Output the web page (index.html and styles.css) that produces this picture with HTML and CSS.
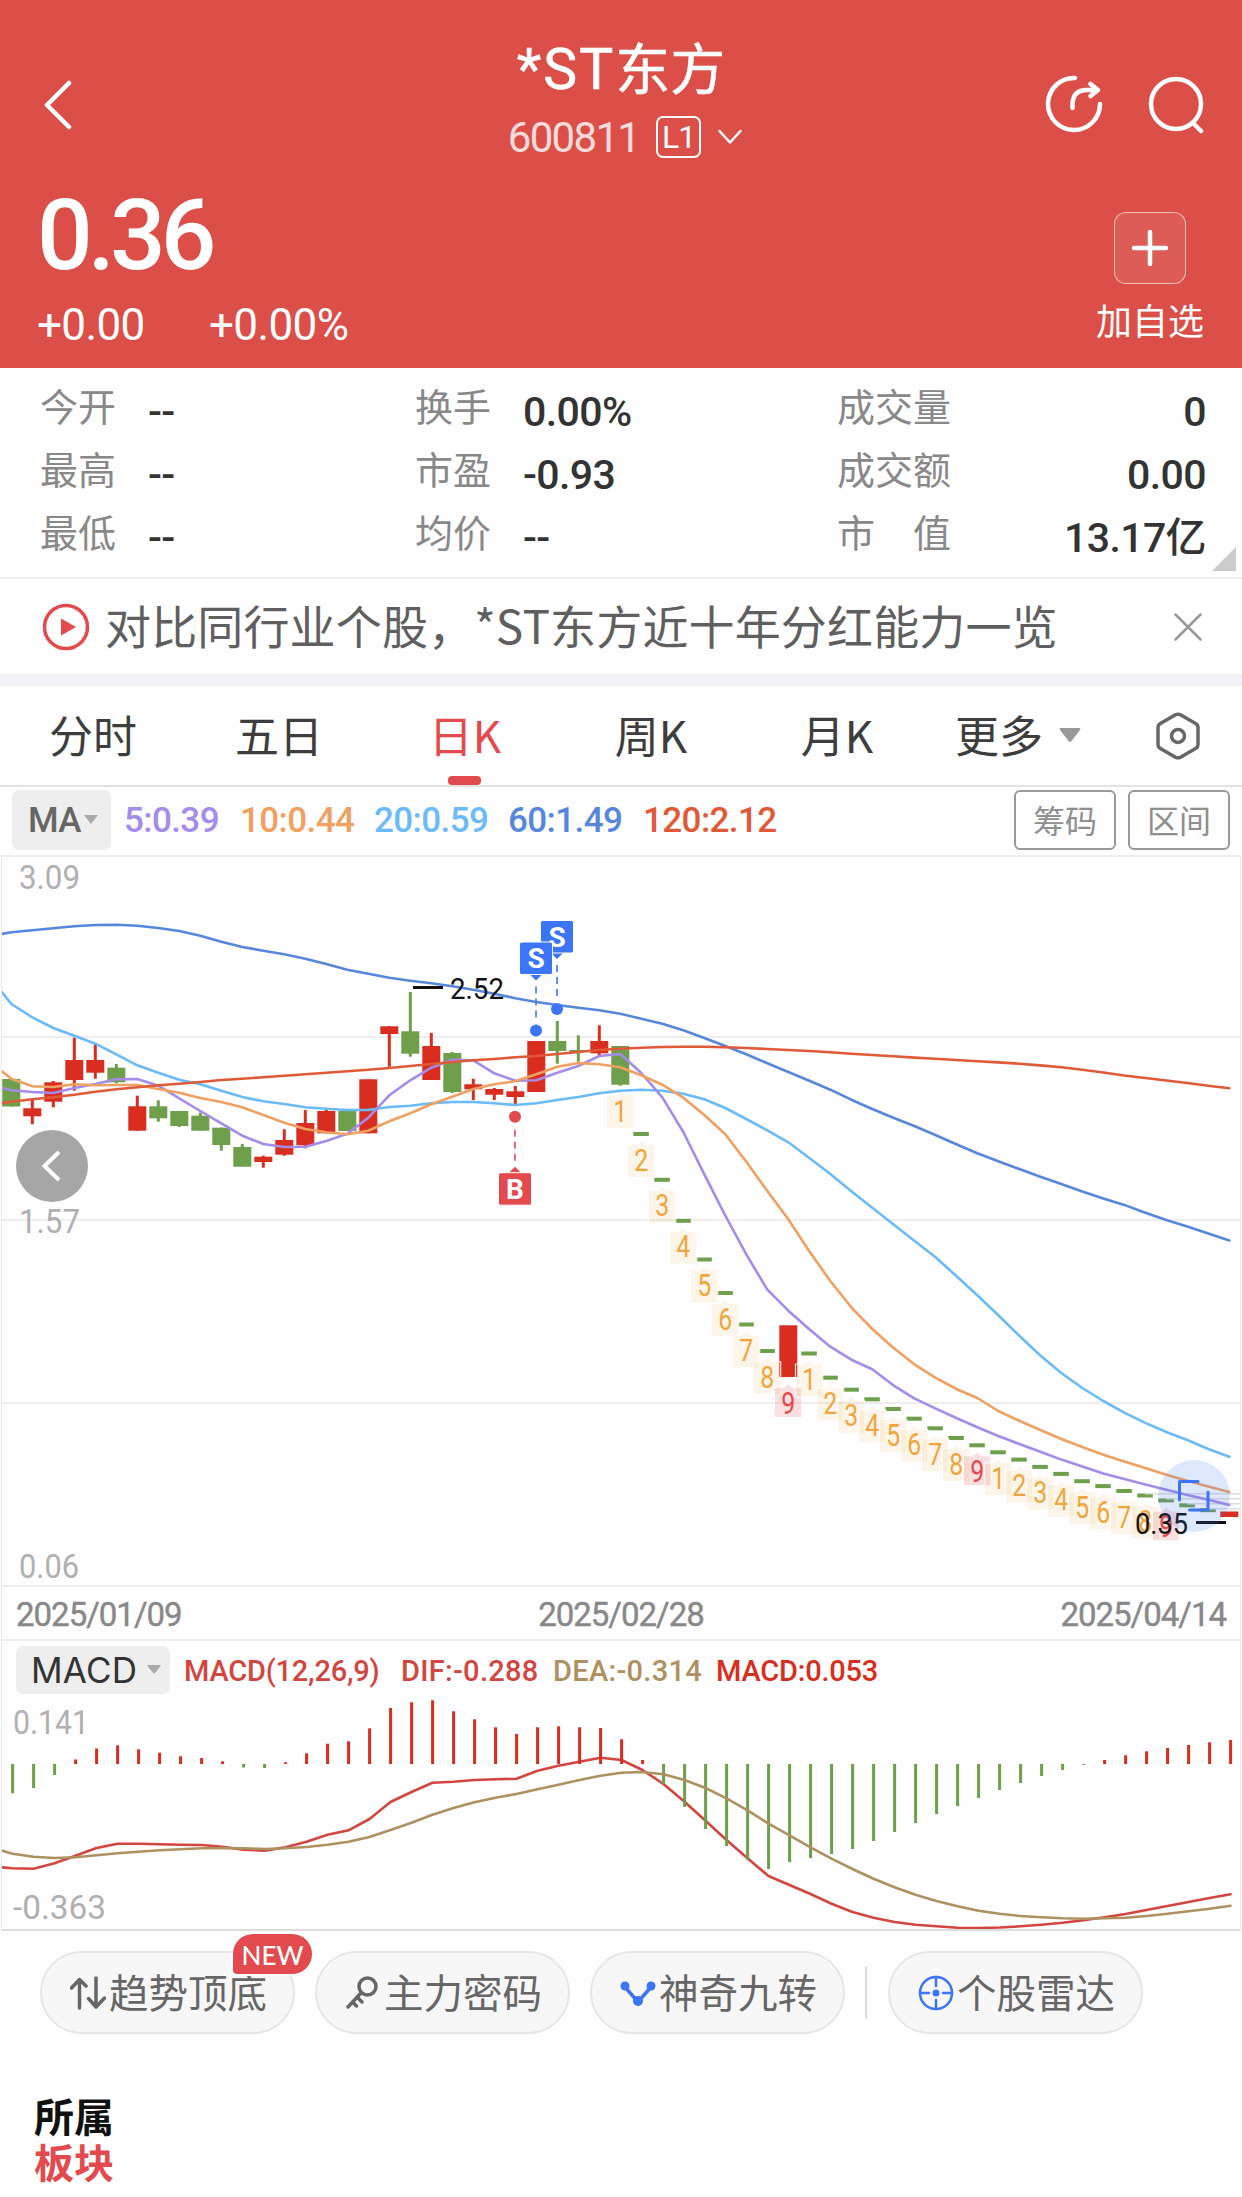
FILE: index.html
```
<!DOCTYPE html>
<html lang="zh-CN">
<head>
    <meta charset="UTF-8">
    <meta name="viewport" content="width=device-width, initial-scale=1.0">
    <title>*ST东方 600811</title>
    <link rel="stylesheet" href="styles.css">
</head>
<body>
<header class="header">
    <div class="topbar">
        <svg class="back" width="30" height="50" viewBox="0 0 30 50"><path d="M26 3L4 25L26 47"/></svg>
        <div class="title">
            <h1><span>*ST</span>东方</h1>
            <div class="code">
                <span class="num">600811</span>
                <span class="level">L1</span>
                <svg width="24" height="16" viewBox="0 0 24 16"><path d="M1.5 2L12 13.5L22.500 2"/></svg>
            </div>
        </div>
        <div class="actions">
            <svg width="60" height="60" viewBox="0 0 60 60">
                <path d="M31 4A26 26 0 1 0 56 30"/>
                <path d="M28.500 34V31Q28.500 16 43 16H53M46.500 10L54 16L46.500 22"/>
            </svg>
            <svg width="60" height="60" viewBox="0 0 60 60">
                <circle cx="30" cy="30" r="25"/>
                <path d="M47 49L55 57"/>
            </svg>
        </div>
    </div>
    <div class="quote">
        <div>
            <div class="price">0.36</div>
            <div class="change"><span>+0.00</span><span>+0.00%</span></div>
        </div>
        <div class="favorite">
            <div class="plus"><svg width="40" height="40" viewBox="0 0 40 40"><path d="M4 20H36M20 4V36"/></svg></div>
            <span>加自选</span>
        </div>
    </div>
</header>

<section class="stats">
    <div class="stat"><label>今开</label><b>--</b></div>
    <div class="stat"><label>换手</label><b>0.00%</b></div>
    <div class="stat last"><label>成交量</label><b>0</b></div>
    <div class="stat"><label>最高</label><b>--</b></div>
    <div class="stat"><label>市盈</label><b>-0.93</b></div>
    <div class="stat last"><label>成交额</label><b>0.00</b></div>
    <div class="stat"><label>最低</label><b>--</b></div>
    <div class="stat"><label>均价</label><b>--</b></div>
    <div class="stat last"><label>市　值</label><b>13.17亿</b></div>
    <i class="corner"></i>
</section>

<section class="notice">
    <svg class="play" width="48" height="48" viewBox="0 0 48 48">
        <circle cx="24" cy="24" r="21.500"/>
        <path d="M19 15.500L34 24L19 32.500Z"/>
    </svg>
    <p>对比同行业个股，*ST东方近十年分红能力一览</p>
    <svg class="close" width="28" height="28" viewBox="0 0 28 28"><path d="M1.500 1.500L26.500 26.500M26.500 1.500L1.500 26.500"/></svg>
</section>

<nav class="tabs">
    <span>分时</span>
    <span>五日</span>
    <span class="active">日K</span>
    <span>周K</span>
    <span>月K</span>
    <span class="more">更多<svg width="22" height="16" viewBox="0 0 22 16"><path d="M2 1H20Q22 1 21 3L12.500 14Q11 16 9.500 14L1 3Q0 1 2 1Z"/></svg></span>
    <svg class="setting" width="48" height="48" viewBox="0 0 48 48">
        <path d="M21.500 2.800Q24 1.500 26.500 2.800L42 11.800Q44 13 44 15.500V32.500Q44 35 42 36.200L26.500 45.200Q24 46.500 21.500 45.200L6 36.200Q4 35 4 32.500V15.500Q4 13 6 11.800Z"/>
        <circle cx="24" cy="24" r="6.500"/>
    </svg>
</nav>

<div class="ma-bar">
    <div class="select">MA<svg width="16" height="10" viewBox="0 0 16 10"><path d="M1 0H15L8 9Z"/></svg></div>
    <span class="ma5">5:0.39</span>
    <span class="ma10">10:0.44</span>
    <span class="ma20">20:0.59</span>
    <span class="ma60">60:1.49</span>
    <span class="ma120">120:2.12</span>
    <button class="first">筹码</button>
    <button>区间</button>
</div>

<div class="panel">
    <svg id="kline" width="1238" height="732" viewBox="2 855 1238 732"></svg>
    <div class="dates"><span>2025/01/09</span><span>2025/02/28</span><span>2025/04/14</span></div>
    <div class="macd-bar">
        <div class="select">MACD<svg width="14" height="9" viewBox="0 0 14 9"><path d="M0 0H14Q13 2 7.500 8.500H6.500Q1 2 0 0Z"/></svg></div>
        <span class="dif params">MACD(12,26,9)</span>
        <span class="dif value">DIF:-0.288</span>
        <span class="dea">DEA:-0.314</span>
        <span class="macd">MACD:0.053</span>
    </div>
    <svg id="macd" width="1238" height="232" viewBox="2 1697 1238 232"></svg>
</div>

<div class="tools">
    <div class="pill">
        <svg width="36" height="36" viewBox="0 0 36 36"><path d="M9.500 33V5M1.500 13L9.500 4.500L16 11M26 3V31M18.500 23.500L26 32L34.500 23"/></svg>趋势顶底
        <em>NEW</em>
    </div>
    <div class="pill">
        <svg width="36" height="36" viewBox="0 0 36 36"><circle cx="22.500" cy="11.500" r="8.500"/><path d="M16 18L3 32M12 22L17 27M7.500 27L11.500 31"/></svg>主力密码
    </div>
    <div class="pill blue">
        <svg width="36" height="36" viewBox="0 0 36 36"><path d="M5 12L18 27L31 12"/><circle class="dot" cx="5" cy="11" r="4.500"/><circle class="dot" cx="18" cy="26" r="5"/><circle class="dot" cx="31" cy="11" r="4.500"/></svg>神奇九转
    </div>
    <i class="divider"></i>
    <div class="pill blue radar">
        <svg width="36" height="36" viewBox="0 0 36 36"><circle cx="18" cy="18" r="16"/><path d="M18 2V11M18 25V34M2 18H11M25 18H34"/><circle class="dot" cx="18" cy="18" r="3.500"/></svg>个股雷达
    </div>
</div>

<h2 class="sector">所属<br><span>板块</span></h2>

<script src="chart.js"></script>
</body>
</html>
```
FILE: styles.css
```
body {
    margin: 0;
    width: 1242px;
    background-color: #fefefe;
    font-family: Roboto, "Noto Sans CJK SC", sans-serif;
    color: #333;
}

svg {
    display: block;
    flex: none;
    fill: none;
    stroke-linecap: round;
    stroke-linejoin: round;
}

/* header */
.header {
    height: 368px;
    box-sizing: border-box;
    padding: 35px 37px 0 37px;
    background-color: #dc4f48;
    color: #fff;
}

.header svg {
    stroke: #fff;
    stroke-width: 4.5;
}

.topbar {
    display: grid;
    grid-template-columns: 200px 1fr 200px;
    height: 161px;
}

.back {
    margin: 45px 0 0 6px;
}

.title h1 {
    margin: 0 0 21px;
    font: 400 55px/60px "Noto Sans CJK SC", sans-serif;
    text-align: center;
    -webkit-text-stroke: 0.6px #fff;
}

.title h1 span {
    font-family: Roboto, sans-serif;
    font-size: 57px;
    line-height: 50px;
    letter-spacing: 2px;
}

.code {
    display: flex;
    align-items: center;
    justify-content: center;
    height: 42px;
    padding-left: 8px;
}

.code .num {
    font-size: 42px;
    letter-spacing: -1.7px;
    margin-right: 17px;
    opacity: 0.8;
}

.level {
    box-sizing: border-box;
    width: 45px;
    height: 42px;
    border: 2px solid #fff;
    border-radius: 7px;
    font-size: 32px;
    line-height: 38px;
    letter-spacing: -1px;
    text-align: center;
    margin-right: 17px;
}

.code svg {
    stroke-width: 2.5;
}

.actions {
    display: flex;
    justify-content: flex-end;
    gap: 42px;
    margin: 39px -1px 0 0;
}

.quote {
    display: flex;
    justify-content: space-between;
}

.price {
    font-size: 98px;
    font-weight: 500;
    line-height: 80px;
    letter-spacing: -5px;
}

.change {
    margin-top: 27px;
    font-size: 44px;
    line-height: 44px;
    letter-spacing: -0.6px;
}

.change span {
    display: inline-block;
    width: 172px;
}

.favorite {
    display: flex;
    flex-direction: column;
    align-items: center;
    padding: 16px 1px 0 0;
    font-size: 36px;
    line-height: 36px;
}

.plus {
    display: flex;
    align-items: center;
    justify-content: center;
    width: 70px;
    height: 70px;
    margin: 0 0 21px;
    border: 1px solid rgba(255, 255, 255, 0.6);
    border-radius: 12px;
    background-color: rgba(255, 255, 255, 0.08);
}

/* quote numbers */
.stats {
    position: relative;
    display: grid;
    grid-template-columns: 375px 422px 1fr;
    grid-auto-rows: 63px;
    height: 211px;
    box-sizing: border-box;
    padding: 12px 36px 0 40px;
    border-bottom: 2px solid #eee;
}

.stat {
    display: flex;
    align-items: center;
    height: 63px;
}

.stat label {
    margin-right: 32px;
    padding-bottom: 7px;
    font-size: 38px;
    line-height: 46px;
    color: #888;
}

.stat b {
    font-size: 41px;
    font-weight: 500;
    line-height: 46px;
    letter-spacing: -0.6px;
}

.stat.last {
    justify-content: space-between;
}

.corner {
    position: absolute;
    right: 6px;
    bottom: 6px;
    border-left: 24px solid transparent;
    border-bottom: 24px solid #ccc;
}

.notice {
    display: flex;
    align-items: center;
    height: 94px;
    padding: 0 40px 0 42px;
    border-bottom: 12px solid #f2f3f8;
    margin-top: 1px;
}

.play circle {
    stroke: #e34a4d;
    stroke-width: 3.5;
}

.play path {
    fill: #e34a4d;
}

.notice p {
    flex: 1;
    margin: 0 0 6px 15px;
    font: 46px/50px "Noto Sans CJK SC", sans-serif;
    letter-spacing: 0.15px;
    white-space: nowrap;
    color: #5f5f5f;
}

.close {
    stroke: #999;
    stroke-width: 2.5;
}

/* period tabs */
.tabs {
    display: flex;
    align-items: center;
    height: 99px;
    border-bottom: 2px solid #e3e3e3;
    font: 44px/60px "Noto Sans CJK SC", sans-serif;
    color: #3d3d3d;
}

.tabs span {
    position: relative;
    width: 186px;
    padding-bottom: 4px;
    text-align: center;
}

.tabs .active {
    color: #e34a4d;
}

.tabs .active::after {
    content: "";
    position: absolute;
    left: 76px;
    bottom: -17px;
    width: 33px;
    height: 9px;
    border-radius: 4px;
    background-color: #e34a4d;
}

.tabs .more {
    display: flex;
    align-items: center;
    gap: 16px;
    width: 130px;
    padding-left: 25px;
}

.tabs .more svg {
    fill: #999;
    margin-top: 2px;
}

.setting {
    margin-left: 69px;
    stroke: #666;
    stroke-width: 3.5;
}

.ma-bar {
    display: flex;
    align-items: center;
    height: 66px;
    padding: 0 12px 2px;
    font-size: 35px;
    letter-spacing: -0.6px;
}

.select {
    display: flex;
    align-items: center;
    box-sizing: border-box;
    border-radius: 7px;
    background-color: #eee;
}

.select svg {
    fill: #aaa;
}

.ma-bar .select {
    width: 99px;
    height: 60px;
    padding-left: 16px;
    gap: 2px;
    font-weight: 500;
    color: #666;
}

.ma-bar span {
    font-weight: 500;
    font-size: 35px;
}

.ma5 { width: 116px; margin-left: 13px; color: #a58bea; }
.ma10 { width: 134px; color: #f0a060; }
.ma20 { width: 134px; color: #6abbf8; }
.ma60 { width: 135px; color: #5787dd; }
.ma120 { color: #e05a38; }

.ma-bar button {
    width: 102px;
    height: 60px;
    margin: 0 0 0 12px;
    padding: 0 0 3px;
    border: 2px solid #999;
    border-radius: 6px;
    background: none;
    font: 32px/50px "Noto Sans CJK SC", sans-serif;
    color: #8f8f8f;
}

.ma-bar .first {
    margin-left: auto;
}

/* charts */
.panel {
    margin: 0 1px;
    border: 1px solid #ebebeb;
    border-top: 0;
    border-bottom: 2px solid #ddd;
}

.panel text {
    stroke: none;
}

.dates {
    display: flex;
    justify-content: space-between;
    box-sizing: border-box;
    height: 54px;
    padding: 0 14px 0 14px;
    border-bottom: 2px solid #eee;
    font-size: 33px;
    line-height: 56px;
    letter-spacing: -1px;
    -webkit-text-stroke: 0.4px #888;
    color: #888;
}

.macd-bar {
    display: flex;
    align-items: center;
    height: 56px;
    padding: 1px 14px 0;
    box-sizing: border-box;
    font-size: 29px;
    letter-spacing: -0.2px;
    font-weight: 500;
}

.macd-bar span {
    padding-top: 3px;
}

.macd-bar .select {
    width: 154px;
    height: 48px;
    padding-left: 15px;
    gap: 10px;
    font: 35px Inter, sans-serif;
    letter-spacing: 0.2px;
}

.dif { color: #d34640; }
.params { width: 217px; margin-left: 14px; }
.value { width: 152px; letter-spacing: 0.3px; }
.dea { width: 163px; letter-spacing: 0.3px; color: #ae9160; }
.macd { color: #d92d20; }

/* bottom tools */
.tools {
    display: flex;
    align-items: center;
    padding: 20px 40px 0;
    gap: 20px;
}

.pill {
    position: relative;
    display: flex;
    align-items: center;
    gap: 3px;
    box-sizing: border-box;
    width: 255px;
    height: 83px;
    padding: 0 0 3px 28px;
    border: 2px solid #e6e6e6;
    border-radius: 42px;
    background-color: #f7f7f7;
    font: 39.5px/50px "Noto Sans CJK SC", sans-serif;
    white-space: nowrap;
    color: #666;
}

.pill svg {
    stroke: #666;
    stroke-width: 3.5;
    margin-top: 3px;
}

.pill.blue svg {
    stroke: #3b74f7;
    stroke-width: 3.5;
}

.pill.radar svg {
    stroke-width: 2.5;
}

.pill .dot {
    fill: #3b74f7;
    stroke: none;
}

.pill em {
    position: absolute;
    left: 191px;
    top: -19px;
    width: 79px;
    height: 40px;
    border-radius: 20px 20px 20px 4px;
    box-shadow: 0 0 0 2px #fff;
    background-color: #e34a4d;
    color: #fff;
    font: 500 26px/42px Lato, sans-serif;
    text-align: center;
}

.divider {
    width: 2px;
    height: 53px;
    margin-right: 1px;
    background-color: #ddd;
}

.sector {
    margin: 58px 0 0 34px;
    font: 700 40px/46px "Noto Sans CJK SC", sans-serif;
    color: #111;
}

.sector span {
    color: #e34a4d;
}
```
FILE: chart.js
```
const RED = '#d92d20';
const GREEN = '#6e9f4b';
const STEP = 21;

function x(i) {
    return 11.3 + i * STEP;
}

// [color, high, top, bottom, low]
const candles = [
    ['g', 1079, 1079, 1106.500, 1106.500], ['r', 1099, 1108.300, 1116.300, 1124.300], ['r', 1081, 1082.300, 1101.700, 1107.300],
    ['r', 1037.700, 1060, 1080, 1090.700], ['r', 1044, 1060, 1072.700, 1078.700], ['g', 1064, 1067.700, 1082.300, 1083.300],
    ['r', 1095.700, 1106.300, 1130.700, 1130.700], ['g', 1100.300, 1106.300, 1118.300, 1121.700], ['g', 1111, 1111, 1126, 1127],
    ['g', 1112.700, 1115.700, 1130.700, 1130.700], ['g', 1127.500, 1127.700, 1145, 1150.700], ['g', 1144, 1147, 1166.700, 1166.700],
    ['r', 1155.700, 1156.700, 1162, 1167.700], ['r', 1129.300, 1140, 1154.700, 1155.700], ['r', 1110, 1123, 1145.300, 1148.300],
    ['r', 1108.700, 1111, 1133.300, 1133.300], ['g', 1111, 1111, 1131, 1131], ['r', 1079.300, 1079.300, 1133.300, 1133.300],
    ['r', 1026.300, 1026.300, 1034, 1066.700], ['g', 992, 1031.300, 1053.700, 1056.700], ['r', 1033, 1046, 1080, 1080],
    ['g', 1052, 1053, 1092, 1093], ['r', 1078.700, 1084.300, 1089.300, 1100], ['r', 1088, 1089, 1094.700, 1100],
    ['r', 1086, 1091.300, 1097, 1105], ['r', 1041, 1041, 1092, 1092], ['g', 1021, 1041, 1051, 1063.700],
    ['g', 1035.300, 1050, 1052, 1061.700], ['r', 1025.300, 1041, 1053.300, 1055], ['g', 1046, 1046, 1084.700, 1085.700]
];

// limit-down days are flat, only the price level is needed
const flat = {
    30: 1134, 31: 1179.800, 32: 1220.800, 33: 1259.500, 34: 1293, 35: 1324.500, 36: 1351,
    38: 1353.500, 39: 1377.700, 40: 1389.700, 41: 1399.300, 42: 1409, 43: 1418.700, 44: 1428.300, 45: 1438,
    46: 1445.300, 47: 1452.300, 48: 1459.600, 49: 1466.900, 50: 1473.900, 51: 1481.200, 52: 1486.100,
    53: 1491, 54: 1495.500, 55: 1500.400, 56: 1505.300, 57: 1510.200
};

// first value of every line is the point on the left edge
const ma120 = [1103.3, 1101.7, 1099.3, 1097.3, 1094.7, 1091.7, 1089.3, 1087.3, 1085.3, 1083.7, 1082, 1080, 1078.7, 1077.3, 1075.7, 1074.3, 1072.7, 1071.3, 1069.7, 1068, 1066, 1064, 1062, 1060.3, 1059, 1057.3, 1056, 1054, 1052, 1050, 1048.7, 1047.7, 1047, 1046.7, 1046.7, 1047.2, 1048, 1049, 1050, 1051, 1052.3, 1053.7, 1055, 1056.3, 1057.6, 1058.8, 1060, 1061.2, 1062.4, 1063.7, 1065.4, 1067.3, 1069.8, 1072.5, 1075.5, 1078, 1080.5, 1083, 1085.7, 1088.2];
const ma60 = [934, 932.3, 930.3, 928.3, 926.3, 925, 924.7, 925.7, 928, 931, 935.7, 941.7, 947, 950.7, 954.3, 958.7, 964, 969.7, 973.7, 977.7, 980.7, 983.3, 986.3, 989.7, 993.7, 998.3, 1002, 1005, 1007.7, 1010.3, 1013.7, 1018.7, 1023.7, 1030.3, 1038, 1046, 1054.3, 1063.3, 1072, 1080.7, 1089.7, 1099.7, 1109, 1117.7, 1126, 1135, 1144.3, 1153.3, 1161.3, 1169, 1176.7, 1184, 1191.4, 1198.4, 1204.9, 1212.7, 1220, 1226.5, 1233.5, 1240.4];
const ma20 = [991, 1004, 1017.3, 1028, 1035.7, 1043.7, 1054.3, 1065.3, 1072.7, 1079.7, 1084.3, 1090.7, 1097, 1101.3, 1104, 1107.3, 1108.7, 1110, 1110, 1107, 1105.7, 1103.3, 1102, 1102, 1103.3, 1105, 1103.3, 1100, 1097, 1093.3, 1090.7, 1089.7, 1090.7, 1093.7, 1099.3, 1108, 1119, 1130.3, 1142.3, 1158, 1174, 1191.3, 1207.7, 1224.3, 1240.7, 1257, 1276, 1295.3, 1315.3, 1335.8, 1355.5, 1373, 1388, 1401, 1412.7, 1422.9, 1432, 1440, 1449, 1456.7];
const ma10 = [1070.7, 1078.7, 1086.3, 1087, 1084.3, 1085.3, 1085, 1085, 1089, 1092.7, 1098, 1102, 1107.3, 1115, 1122.7, 1129, 1132.3, 1134.3, 1130.7, 1121.3, 1113.3, 1104.3, 1096.7, 1089, 1084.3, 1081.3, 1074.3, 1066.7, 1063, 1064.3, 1067.3, 1075.3, 1084.7, 1097.7, 1115, 1134.3, 1161.7, 1191, 1219.3, 1251.3, 1281, 1307.3, 1329, 1347.7, 1364.3, 1377.7, 1389, 1398, 1411, 1420.8, 1430, 1439, 1447, 1454.7, 1461.6, 1468, 1474.7, 1480.8, 1486.5, 1492];
const ma5 = [1087.7, 1090.3, 1092, 1093, 1088, 1084, 1079.3, 1079, 1085.7, 1098.3, 1111, 1123.3, 1135.7, 1144, 1147, 1146.7, 1141, 1133.7, 1117.7, 1095.3, 1080.3, 1067.7, 1059.7, 1060.3, 1073.3, 1080.7, 1080.3, 1072.7, 1066, 1056, 1054, 1073, 1097.3, 1132, 1174.3, 1215.5, 1254.3, 1289.7, 1310.7, 1329.3, 1346.7, 1359.7, 1369.3, 1385.3, 1398.3, 1408.3, 1418, 1427.3, 1436, 1444, 1451.8, 1459.6, 1466.5, 1473.5, 1479, 1484.5, 1489.8, 1495, 1499.8, 1505];

const bars = [-29.3, -24, -11, 4.5, 15.5, 18.7, 14.7, 11.3, 7.7, 6, 2.7, -3.5, -4, 1.7, 10.7, 20.3, 22.7, 35.7, 56, 61.7, 63.7, 52.7, 44.7, 36.7, 30, 36.7, 37.7, 36.7, 36, 24.7, 4, -20, -43, -65, -82, -95.7, -105, -98, -94, -90, -85, -77, -68, -59, -50, -42, -34, -26, -19, -12, -6, -1, 4, 8.7, 12.7, 16, 19, 21.7, 24];
const dif = [1867.3, 1868.3, 1868.7, 1863.3, 1855.7, 1848, 1843.7, 1843.7, 1844.3, 1844.7, 1845, 1846.7, 1849.7, 1850.7, 1847.3, 1841.7, 1834.7, 1830.3, 1819, 1802, 1792, 1782.7, 1781.7, 1780, 1779.3, 1778.7, 1770.7, 1765.7, 1761.7, 1757.7, 1760, 1770, 1784, 1801.7, 1820.7, 1840, 1858.3, 1876, 1885, 1894, 1903.7, 1912, 1917.7, 1922, 1924.7, 1926.3, 1927.7, 1928, 1927.5, 1926.3, 1924.7, 1922.7, 1920.3, 1917.3, 1914, 1910, 1906, 1902, 1898, 1894.3];
const dea = [1850.3, 1853.7, 1856.7, 1858, 1857.3, 1855.3, 1853.3, 1851.7, 1850.3, 1849.3, 1848.3, 1848, 1848.3, 1849, 1848.3, 1847, 1844.7, 1841.7, 1837, 1830, 1822.7, 1814.7, 1808, 1802.3, 1797.7, 1794, 1789.3, 1784.7, 1780, 1775.7, 1772.7, 1772, 1774.3, 1780, 1788, 1798.3, 1810.3, 1823.7, 1835.3, 1847.3, 1858.7, 1869, 1878.7, 1887.3, 1894.7, 1901, 1906.3, 1910.7, 1913.7, 1916, 1917.3, 1918.3, 1918.7, 1918.3, 1917.7, 1916, 1913.7, 1911.3, 1908.7, 1905.7];

function rect(left, top, w, h, color) {
    return `<rect x="${left}" y="${top}" width="${w}" height="${h}" fill="${color}"/>`;
}

function line(values, color, shift = 0) {
    const points = values.map((y, i) => (i ? x(i - 1) + shift : 1) + ',' + y).join(' ');
    return `<polyline points="${points}" stroke="${color}" stroke-width="2.6"/>`;
}

function text(left, base, width, size, color, value) {
    return `<text x="${left}" y="${base}" font-size="${size}" fill="${color}" textLength="${width}" lengthAdjust="spacingAndGlyphs">${value}</text>`;
}

function countLabel(i, price, n) {
    const cx = x(i);
    const top = price + 10.5;
    const height = n === 9 ? 30 : 33;
    const box = n === 9 ? 'rgba(227,74,77,.17)' : 'rgba(245,170,60,.11)';
    const color = n === 9 ? '#e34a4d' : '#f0a63c';
    return `<path d="M${cx - 13.5} ${top}h9.500l4-4l4 4h9.500v${height}h-27z" fill="${box}" stroke="#fff" stroke-width="1"/>`
        + text(cx - 7, top + 26, 14, 31, color, n);
}

function marker(i, top, letter, color, up) {
    const cx = x(i) - 0.3;
    const dir = up ? -1 : 1;
    const edge = up ? top : top + 32.5;
    const dot = edge + dir * 56;
    return `<path d="M${cx} ${edge + dir * 12}V${dot - dir * 8}" stroke="${color}" stroke-width="2" stroke-dasharray="7 5" stroke-linecap="butt" opacity=".8"/>`
        + `<circle cx="${cx}" cy="${dot}" r="6" fill="${color}"/>`
        + `<path d="M${cx - 6} ${edge}l6 ${dir * 6}l6 ${-dir * 6}z" fill="${color}"/>`
        + `<rect x="${cx - 16.5}" y="${top}" width="33" height="32.500" rx="2" fill="${color}" stroke="#fff" stroke-width="1"/>`
        + `<text x="${cx}" y="${top + 26}" font-size="28" font-weight="700" fill="#fff" text-anchor="middle">${letter}</text>`;
}

function drawKline() {
    let html = [856, 1037, 1220, 1403, 1586].map(y => rect(0, y - 1, 1242, 2, '#eee')).join('');
    html += text(19, 888.5, 61, 33, '#b0b0b0', '3.09');
    html += text(19, 1233, 61, 33, '#b0b0b0', '1.57');
    html += text(19, 1578, 60, 33, '#b0b0b0', '0.06');

    candles.forEach(([c, high, top, bottom, low], i) => {
        const color = c === 'r' ? RED : GREEN;
        html += rect(x(i) - 9, top, 18, bottom - top, color) + rect(x(i) - 1.5, high, 3, low - high, color);
    });
    html += rect(x(37) - 9, 1325.3, 18, 51.7, RED);
    html += rect(x(58) - 9, 1511.5, 18, 5.500, RED);
    for (const i in flat) {
        html += rect(x(+i) - 8, flat[i] - 2, 15.5, 4, GREEN);
    }

    for (let i = 29; i < 56; i++) {
        const price = i === 29 ? 1085 : i === 37 ? 1377 : flat[i];
        html += countLabel(i, price, (i - 29) % 9 + 1);
    }

    [[1145, 1493], [1166, 1498], [1187, 1503], [1208, 1508]].forEach(([left, y]) => {
        html += rect(left, y, 1240 - left, 1.5, '#ddd');
    });
    html += line(ma60, '#5787dd') + line(ma20, '#6abbf8') + line(ma5, '#a58bea') + line(ma10, '#f0a060') + line(ma120, '#e05a38');

    html += rect(413, 986, 30, 3, '#111') + text(450, 999, 54, 30, '#111', '2.52');
    html += rect(1196, 1521, 30, 3, '#111') + text(1135, 1534, 53, 30, '#111', '0.35');
    html += '<circle cx="1194" cy="1496" r="36" fill="rgba(59,116,247,.16)"/>';
    html += '<path d="M1179.500 1500V1481.500H1198M1208 1492V1510H1189.500" stroke="#3b74f7" stroke-width="3"/>';

    html += marker(26, 920.5, 'S', '#3b74f7', false);
    html += marker(25, 942, 'S', '#3b74f7', false);
    html += marker(24, 1172.7, 'B', '#e34a4d', true);

    // scroll back button
    html += '<circle cx="52" cy="1166" r="36" fill="#a6a6a6"/><path d="M59 1152L44.500 1166L59 1180" stroke="#fff" stroke-width="4" stroke-linecap="butt" stroke-linejoin="miter"/>';
    document.getElementById('kline').innerHTML = html;
}

function drawMacd() {
    const zero = 1764;
    let html = text(13, 1734, 76, 33, '#b0b0b0', '0.141');
    html += text(13, 1919, 93, 33, '#b0b0b0', '-0.363');
    html += line(dif, '#d34640', 1.2);
    bars.forEach((v, i) => {
        html += rect(x(i) - 0.2, v > 0 ? zero - v : zero, 3, Math.abs(v), v > 0 ? RED : GREEN);
    });
    html += line(dea, '#ae9160', 1.2);
    document.getElementById('macd').innerHTML = html;
}

drawKline();
drawMacd();
```
